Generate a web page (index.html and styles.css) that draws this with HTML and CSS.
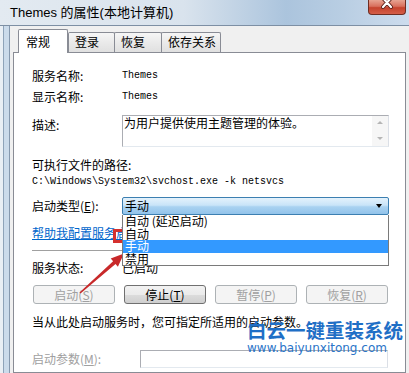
FILE: index.html
```html
<!DOCTYPE html>
<html lang="zh-CN">
<head>
    <meta charset="UTF-8">
    <title>Themes 的属性(本地计算机)</title>
    <link rel="stylesheet" href="styles.css">
</head>
<body>
<div class="window">
    <div class="titlebar">
        <span class="title">Themes 的属性(本地计算机)</span>
        <div class="close-btn">
            <svg width="38" height="15" viewBox="0 0 38 15">
                <path d="M15 1 L23 10 M23 1 L15 10" stroke="#5a2018" stroke-width="4" stroke-linecap="round"/>
                <path d="M15 1 L23 10 M23 1 L15 10" stroke="#fff" stroke-width="2.2" stroke-linecap="round"/>
            </svg>
        </div>
    </div>

    <div class="frame">
        <div class="client">
            <div class="tabs">
                <div class="tab active">常规</div>
                <div class="tab">登录</div>
                <div class="tab">恢复</div>
                <div class="tab wide">依存关系</div>
            </div>

            <div class="panel">
                <div class="row r-name">
                    <span class="label">服务名称:</span>
                    <span class="mono">Themes</span>
                </div>
                <div class="row r-display">
                    <span class="label">显示名称:</span>
                    <span class="mono">Themes</span>
                </div>
                <div class="row r-desc">
                    <span class="label">描述:</span>
                    <div class="textbox">
                        为用户提供使用主题管理的体验。
                        <div class="scrollbar">
                            <span class="sb-up"></span>
                            <span class="sb-down"></span>
                        </div>
                    </div>
                </div>

                <div class="path-label">可执行文件的路径:</div>
                <div class="mono path">C:\Windows\System32\svchost.exe -k netsvcs</div>

                <div class="row r-type">
                    <span class="label">启动类型(<u>E</u>):</span>
                    <div class="combo">
                        <span>手动</span>
                        <span class="combo-arrow"></span>
                        <ul class="dropdown">
                            <li>自动 (延迟启动)</li>
                            <li>自动</li>
                            <li class="selected">手动</li>
                            <li>禁用</li>
                        </ul>
                    </div>
                </div>

                <a class="help-link">帮助我配置服务启动选项。</a>
                <div class="separator"></div>

                <div class="row r-status">
                    <span class="label">服务状态:</span>
                    <span>已启动</span>
                </div>

                <div class="buttons">
                    <div class="btn disabled">启动(<u>S</u>)</div>
                    <div class="btn">停止(<u>T</u>)</div>
                    <div class="btn disabled">暂停(<u>P</u>)</div>
                    <div class="btn disabled">恢复(<u>R</u>)</div>
                </div>

                <p class="hint">当从此处启动服务时，您可指定所适用的启动参数。</p>

                <div class="row r-params">
                    <span class="label wide-label disabled-text">启动参数(<u>M</u>):</span>
                    <div class="input"></div>
                </div>
            </div>
        </div>
    </div>

    <!-- marcações por cima da captura -->
    <div class="mark-box"></div>
    <svg class="mark-arrow" width="409" height="373" viewBox="0 0 409 373">
        <polygon points="79.5,292.4 113.1,261.3 110.7,258.5 124,253.5 117.9,266.7 115.5,263.9 80.5,293.6" fill="#c8292a"/>
    </svg>

    <div class="watermark">
        <div class="wm-title">白云一键重装系统</div>
        <div class="wm-url">www.baiyunxitong.com</div>
    </div>
</div>
</body>
</html>
```

FILE: styles.css
```css
/* Base */
body {
    margin: 0;
    font-family: "Noto Sans CJK SC", sans-serif;
    font-size: 12px;
    color: #000;
}

.window {
    position: relative;
    width: 409px;
    height: 373px;
    overflow: hidden;
    background-color: #f0f0f0;
}

/* Barra de título */
.titlebar {
    display: flex;
    align-items: flex-start;
    height: 25px;
    border-bottom: 1px solid #7d8fa4;
    background: linear-gradient(to right, #e3eaf1 0%, #d9e3ed 45%, #abc4dd 70%, #b9cee3 84%, #cddced 100%);
}

.title {
    margin: 5px 0 0 10px;
    font-family: "Liberation Sans", "Noto Sans CJK SC", sans-serif;
    font-size: 13px;
    line-height: 15px;
}

.close-btn {
    margin-left: auto;
    margin-right: 3px;
    width: 38px;
    height: 15px;
    border: 1px solid #6e2d22;
    border-top: none;
    border-radius: 0 0 4px 4px;
    box-sizing: border-box;
    background: linear-gradient(#e7a391, #d8705d 45%, #c5432d 55%, #d45e48);
    overflow: hidden;
}

.close-btn svg {
    display: block;
    margin: -3px 0 0 -1px;
}

/* Moldura */
.frame {
    display: flex;
    height: 347px;
    padding-left: 9px;
    background: linear-gradient(to right, #e9eff5 0 3px, #8ea3b9 3px 4px, #cbdbeb 4px 9px);
}

.client {
    flex: 1;
    display: flex;
    flex-direction: column;
    border-left: 1px solid #8598ae;
    background-color: #f0f0f0;
    padding: 3px 3px 0 3px;
}

/* Abas */
.tabs {
    display: flex;
    align-items: flex-end;
    height: 24px;
    padding-left: 5px;
    margin-bottom: -1px;
    position: relative;
    z-index: 1;
}

.tab {
    box-sizing: border-box;
    width: 48px;
    height: 20px;
    margin-bottom: 1px;
    margin-left: -1px;
    padding: 2px 0 0 6px;
    line-height: 14px;
    border: 1px solid #898c95;
    border-bottom: none;
    border-radius: 2px 2px 0 0;
    background: linear-gradient(#f6f6f6, #eaeaea 50%, #e0e0e0);
}

.tab.active {
    width: 50px;
    height: 24px;
    margin: 0;
    padding: 5px 0 0 7px;
    background: #fff;
}

.tab.active + .tab {
    margin-left: 0;
    width: 47px;
}

.tab.wide {
    width: 60px;
}

.panel {
    flex: 1;
    background: #fff;
    border: 1px solid #898c95;
    padding: 16px 16px 0 18px;
}

/* Linhas */
.row {
    display: flex;
    align-items: center;
    line-height: 14px;
}

.label {
    width: 90px;
    flex-shrink: 0;
}

.wide-label {
    width: 108px;
}

.mono {
    font-family: "Liberation Mono", monospace;
    font-size: 10px;
    line-height: 14px;
}

.r-display {
    margin-top: 7px;
}

.r-desc {
    margin-top: 11px;
    align-items: flex-start;
}

.r-desc .label {
    padding-top: 3px;
}

.textbox {
    position: relative;
    box-sizing: border-box;
    width: 267px;
    height: 32px;
    padding: 0 1px;
    border: 1px solid #abadb3;
    border-right-color: #dbdfe6;
    border-bottom-color: #e3e9ef;
}

.scrollbar {
    position: absolute;
    top: 0;
    right: 0;
    bottom: 0;
    width: 16px;
    background: #f6f6f6;
}

.sb-up, .sb-down {
    position: absolute;
    left: 5px;
    width: 0;
    height: 0;
    border-left: 3px solid transparent;
    border-right: 3px solid transparent;
}

.sb-up {
    top: 5px;
    border-bottom: 3px solid #b5b5b5;
}

.sb-down {
    bottom: 6px;
    border-top: 3px solid #b5b5b5;
}

.path-label {
    margin-top: 11px;
    line-height: 14px;
}

.path {
    margin-top: 3px;
}

/* Combobox */
.r-type {
    margin-top: 8px;
}

.combo {
    position: relative;
    box-sizing: border-box;
    width: 267px;
    height: 18px;
    padding-left: 2px;
    line-height: 16px;
    border: 1px solid #3c7fb1;
    border-radius: 2px;
    background: linear-gradient(#e4f2fc, #c9e4f8 45%, #a9d2f1 55%, #92c3ea);
}

.combo-arrow {
    position: absolute;
    right: 6px;
    top: 6px;
    width: 0;
    height: 0;
    border-left: 3.5px solid transparent;
    border-right: 3.5px solid transparent;
    border-top: 4px solid #000;
}

.dropdown {
    position: absolute;
    top: calc(100% + 1px);
    left: -1px;
    right: -1px;
    margin: 0;
    padding: 0;
    list-style: none;
    background: #fff;
    border: 1px solid #7a7a7a;
    border-top: none;
    z-index: 2;
}

.dropdown li {
    height: 12.5px;
    line-height: 12.5px;
    padding-left: 2px;
}

.dropdown li.selected {
    background: #3399ff;
    color: #fff;
}

.help-link {
    display: block;
    margin-top: 11px;
    line-height: 14px;
    color: #0066cc;
    text-decoration: underline;
}

.separator {
    margin-top: 10px;
    border-top: 1px solid #a0a0a0;
}

.r-status {
    margin-top: 10px;
}

/* Botões */
.buttons {
    display: flex;
    gap: 9px;
    margin-top: 10px;
    padding-left: 1px;
}

.btn {
    box-sizing: border-box;
    width: 82px;
    height: 19px;
    line-height: 17px;
    text-align: center;
    border: 1px solid #707070;
    border-radius: 3px;
    background: linear-gradient(#f2f2f2, #ebebeb 50%, #dddddd 50%, #cfcfcf);
}

.btn.disabled {
    color: #a0a0a0;
    border-color: #adb2b5;
    background: #f4f4f4;
}

.hint {
    margin: 11px 0 0;
    line-height: 14px;
}

.r-params {
    margin-top: 21px;
}

.disabled-text {
    color: #a0a0a0;
}

.input {
    box-sizing: border-box;
    width: 248px;
    height: 18px;
    border: 1px solid #abadb3;
    border-right-color: #dbdfe6;
    border-bottom-color: #e3e9ef;
}

/* Marcações */
.mark-box {
    position: absolute;
    left: 113px;
    top: 229px;
    width: 67px;
    height: 14px;
    box-sizing: border-box;
    border: 3px solid #d5302e;
}

.mark-arrow {
    position: absolute;
    left: 0;
    top: 0;
    pointer-events: none;
}

.watermark {
    position: absolute;
    left: 247px;
    top: 319px;
}

.wm-title {
    font-size: 19.5px;
    font-weight: 700;
    line-height: 22px;
    color: #1f6fc6;
}

.wm-url {
    margin-top: 1px;
    font-family: "DejaVu Sans", sans-serif;
    font-size: 12px;
    line-height: 13px;
    color: #2a74c8;
}
```
